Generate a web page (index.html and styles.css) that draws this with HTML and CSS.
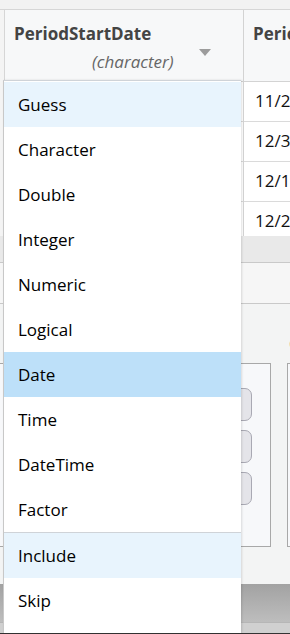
FILE: index.html
```html
<!DOCTYPE html>
<html>

<head>
    <title>Column type</title>
    <link rel="stylesheet" href="styles.css">
</head>

<body>
    <div class="topbar"></div>
    <div class="grid">
        <div class="gutter"></div>
        <div class="col first">
            <div class="head">
                <div class="name">PeriodStartDate</div>
                <div class="type">(character)</div>
                <span class="caret"></span>
            </div>
            <div class="cell"></div>
            <div class="cell"></div>
            <div class="cell"></div>
            <div class="cell last"></div>
        </div>
        <div class="col second">
            <div class="head">
                <div class="name">PeriodEndDate</div>
            </div>
            <div class="cell">11/26/2019</div>
            <div class="cell">12/3/2019</div>
            <div class="cell">12/14/2019</div>
            <div class="cell last">12/24/2019</div>
        </div>
    </div>
    <div class="band"></div>
    <div class="tabs"></div>
    <div class="options">
        <div class="opt-title">Column</div>
        <div class="boxes">
            <div class="box">
                <div class="btn"></div>
                <div class="btn"></div>
                <div class="btn"></div>
            </div>
            <div class="box wide"></div>
        </div>
    </div>
    <div class="footer"></div>

    <ul class="menu">
        <li class="soft">Guess</li>
        <li>Character</li>
        <li>Double</li>
        <li>Integer</li>
        <li>Numeric</li>
        <li>Logical</li>
        <li class="picked">Date</li>
        <li>Time</li>
        <li>DateTime</li>
        <li class="split">Factor</li>
        <li class="soft">Include</li>
        <li>Skip</li>
    </ul>
</body>

</html>
```

FILE: styles.css
```css
body {
    margin: 0;
    background: #f3f4f4;
    font-family: "Open Sans", "Noto Sans", sans-serif;
    overflow: hidden;
    height: 634px;
    position: relative;
}

.topbar {
    height: 9px;
    background: #f2f2f2;
    border-bottom: 1px solid #d6d6d6;
}

.grid {
    display: flex;
    height: 226px;
    background: #fff;
    overflow: hidden;
}

.gutter {
    width: 4px;
    background: #f4f4f4;
    border-right: 1px solid #d6d6d6;
    flex: none;
}

.col {
    flex: none;
    overflow: hidden;
}

.col.first {
    width: 238px;
    border-right: 1px solid #d3d3d3;
}

.col.second {
    width: 46px;
    white-space: nowrap;
}

.head {
    height: 71px;
    background: #f7f8f9;
    border-bottom: 1px solid #d3d3d3;
    position: relative;
}

.name {
    font-size: 17px;
    font-weight: bold;
    color: #444;
    padding: 12px 0 0 9px;
    height: 28px;
}

.type {
    font-size: 17px;
    font-style: italic;
    color: #666;
    padding-left: 87px;
}

.caret {
    position: absolute;
    left: 194px;
    top: 39px;
    border-left: 6px solid transparent;
    border-right: 6px solid transparent;
    border-top: 7px solid #9c9c9c;
}

.cell {
    height: 39px;
    border-bottom: 1px solid #dadada;
    font-size: 17px;
    color: #111;
    padding-left: 11px;
    line-height: 37px;
}

.cell.last {
    border-bottom: none;
    height: 35px;
}

.band {
    height: 26px;
    background: #e9e9e9;
}

.tabs {
    height: 40px;
    background: #f6f6f6;
    border-top: 1px solid #c9c9c9;
    border-bottom: 1px solid #c9c9c9;
}

.options {
    height: 280px;
    background: #f3f4f4;
}

.opt-title {
    font-size: 17px;
    color: #222;
    padding: 28px 0 0 289px;
    height: 31px;
    white-space: nowrap;
}

.boxes {
    display: flex;
    gap: 16px;
}

.box {
    width: 271px;
    height: 184px;
    border: 1px solid #a8a8a8;
    border-left: none;
    background: #f7f8fa;
    display: flex;
    flex-direction: column;
    align-items: flex-end;
    padding: 24px 18px 0 0;
    box-sizing: border-box;
    gap: 9px;
    flex: none;
}

.box.wide {
    width: 60px;
    border-left: 1px solid #a8a8a8;
}

.btn {
    width: 40px;
    height: 33px;
    border: 1px solid #a9a9b3;
    border-radius: 7px;
    background: #e4e4e9;
    box-sizing: border-box;
}

.footer {
    height: 50px;
    background: linear-gradient(#a2a2a2, #bdbdbd 75%, #9c9c9c 76%, #d0d0d0 78%, #d0d0d0 98%, #333 98%);
}

.menu {
    position: absolute;
    left: 3px;
    top: 80px;
    width: 237px;
    margin: 0;
    padding: 1px 0 10px;
    list-style: none;
    background: #fff;
    border-left: 1px solid #c8c8c8;
    border-top: 1px solid #cfd3d8;
    box-shadow: 1px 0 2px rgba(0, 0, 0, 0.12);
}

.menu li {
    height: 45px;
    line-height: 45px;
    padding-left: 14px;
    font-size: 17px;
    color: #000;
}

.menu li.soft {
    background: #e8f4fd;
}

.menu li.picked {
    background: #bde0f9;
}

.menu li.split {
    border-bottom: 1px solid #cfd3d8;
}
```
